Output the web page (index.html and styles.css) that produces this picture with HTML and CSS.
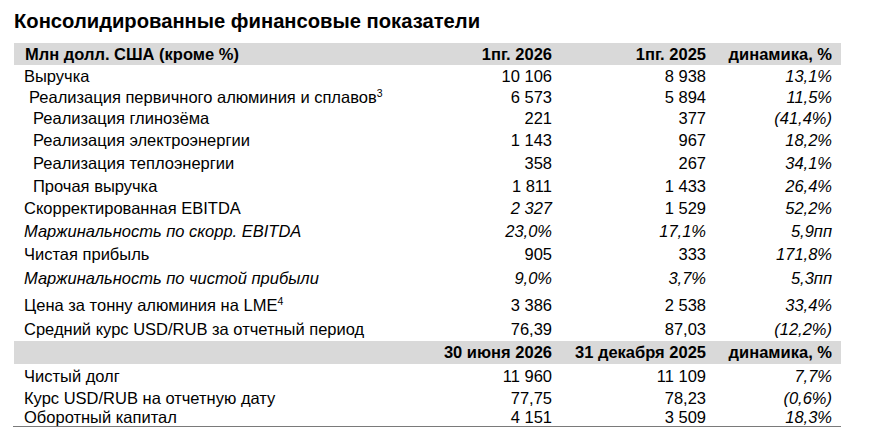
FILE: index.html
```html
<!DOCTYPE html>
<html lang="ru">
<head>
<meta charset="utf-8">
<title>Консолидированные финансовые показатели</title>
<link rel="stylesheet" href="styles.css">
</head>
<body>
<h1 class="title">Консолидированные финансовые показатели</h1>
<table class="fin">
  <colgroup>
    <col class="c-label"><col class="c-a"><col class="c-b"><col class="c-c">
  </colgroup>
  <tr class="head h22">
    <td class="lbl l0">Млн долл. США (кроме %)</td><td class="num">1пг. 2026</td><td class="num">1пг. 2025</td><td class="num last">динамика, %</td>
  </tr>
  <tr class="h22"><td class="lbl l0">Выручка</td><td class="num">10 106</td><td class="num">8 938</td><td class="num last it">13,1%</td></tr>
  <tr class="h21"><td class="lbl l1">Реализация первичного алюминия и сплавов<sup>3</sup></td><td class="num">6 573</td><td class="num">5 894</td><td class="num last it">11,5%</td></tr>
  <tr class="h20"><td class="lbl l2">Реализация глинозёма</td><td class="num">221</td><td class="num">377</td><td class="num last it">(41,4%)</td></tr>
  <tr class="h24"><td class="lbl l2">Реализация электроэнергии</td><td class="num">1 143</td><td class="num">967</td><td class="num last it">18,2%</td></tr>
  <tr class="h23"><td class="lbl l2">Реализация теплоэнергии</td><td class="num">358</td><td class="num">267</td><td class="num last it">34,1%</td></tr>
  <tr class="h22"><td class="lbl l2">Прочая выручка</td><td class="num">1 811</td><td class="num">1 433</td><td class="num last it">26,4%</td></tr>
  <tr class="h23"><td class="lbl l0">Скорректированная EBITDA</td><td class="num it">2 327</td><td class="num">1 529</td><td class="num last it">52,2%</td></tr>
  <tr class="h23 it"><td class="lbl l0">Маржинальность по скорр. EBITDA</td><td class="num">23,0%</td><td class="num">17,1%</td><td class="num last">5,9пп</td></tr>
  <tr class="h22"><td class="lbl l0">Чистая прибыль</td><td class="num">905</td><td class="num">333</td><td class="num last it">171,8%</td></tr>
  <tr class="h27 it"><td class="lbl l0">Маржинальность по чистой прибыли</td><td class="num">9,0%</td><td class="num">3,7%</td><td class="num last">5,3пп</td></tr>
  <tr class="h26"><td class="lbl l0">Цена за тонну алюминия на LME<sup>4</sup></td><td class="num">3 386</td><td class="num">2 538</td><td class="num last it">33,4%</td></tr>
  <tr class="h23"><td class="lbl l0">Средний курс USD/RUB за отчетный период</td><td class="num">76,39</td><td class="num">87,03</td><td class="num last it">(12,2%)</td></tr>
  <tr class="head h23"><td class="lbl l0"></td><td class="num">30 июня 2026</td><td class="num">31 декабря 2025</td><td class="num last">динамика, %</td></tr>
  <tr class="h24"><td class="lbl l0">Чистый долг</td><td class="num">11 960</td><td class="num">11 109</td><td class="num last it">7,7%</td></tr>
  <tr class="h20"><td class="lbl l0">Курс USD/RUB на отчетную дату</td><td class="num">77,75</td><td class="num">78,23</td><td class="num last it">(0,6%)</td></tr>
  <tr class="h18"><td class="lbl l0">Оборотный капитал</td><td class="num">4 151</td><td class="num">3 509</td><td class="num last it">18,3%</td></tr>
</table>
</body>
</html>
```
FILE: styles.css
```css
html, body {
  margin: 0;
  padding: 0;
  background: #ffffff;
}
body {
  font-family: "Liberation Sans", Arial, sans-serif;
  color: #000000;
  font-size: 16.5px;
}
.title {
  margin: 10px 0 0 14px;
  font-size: 20.2px;
  line-height: 22px;
  font-weight: bold;
}
.fin {
  margin: 11px 0 0 13px;
  width: 828px;
  table-layout: fixed;
  border-collapse: separate;
  border-spacing: 0;
  border-bottom: 1px solid #7a7a7a;
}
.c-label { width: 419px; }
.c-a { width: 120px; }
.c-b { width: 154px; }
.c-c { width: 135px; }
.fin td {
  padding: 0;
  white-space: nowrap;
  vertical-align: middle;
  line-height: 17px;
}
.head td {
  background: #d9d9d9;
  font-weight: bold;
}
.fin .head td:first-child { border-left: 1px solid #ffffff; }
.lbl { text-align: left; }
.l0 { padding-left: 11px !important; }
.l1 { padding-left: 16px !important; }
.l2 { padding-left: 20px !important; }
.num { text-align: right; }
.last { padding-right: 9px !important; }
.it { font-style: italic; }
sup {
  font-size: 10.5px;
  line-height: 0;
  vertical-align: 6px;
}
.h18 { height: 18px; }
.h20 { height: 20px; }
.h21 { height: 21px; }
.h22 { height: 22px; }
.h23 { height: 23px; }
.h24 { height: 24px; }
.h26 { height: 26px; }
.h27 { height: 27px; }
```
